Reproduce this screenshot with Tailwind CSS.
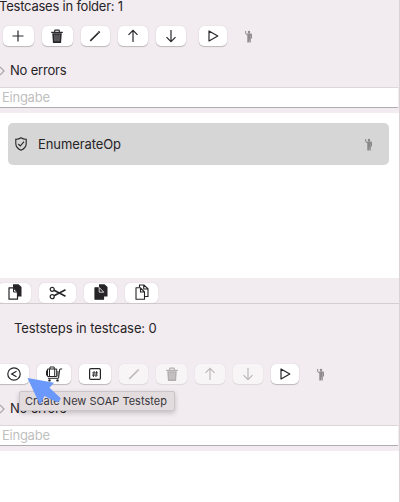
<!DOCTYPE html>
<html lang="en">
<head>
<meta charset="utf-8">
<title>Testcases</title>
<script src="https://cdn.jsdelivr.net/npm/@tailwindcss/browser@4"></script>
</head>
<body class="w-[400px] h-[502px] overflow-hidden bg-white font-['Inter',sans-serif] text-[13px] tracking-[-0.1px] text-[#262427]">
<svg class="hidden">
  <defs>
    <symbol id="plus" viewBox="0 0 16 16"><path d="M8 2.500v11M2.500 8h11" fill="none" stroke="currentColor" stroke-width="1.200"/></symbol>
    <symbol id="trash" viewBox="0 0 16 16"><path d="M5.500 3.200V2q0-.8.8-.8h3.400q.8 0 .8.8v1.200" fill="none" stroke="currentColor" stroke-width="1.200"/><path d="M1.800 3.600h12.400" stroke="currentColor" stroke-width="1.300"/><path d="M2.900 4.600h10.200L12.300 15H3.700z" fill="currentColor"/><path d="M5.700 6l.3 7M8 6v7M10.300 6L10 13" stroke="white" stroke-opacity=".65" stroke-width=".7"/></symbol>
    <symbol id="pencil" viewBox="0 0 16 16"><path d="M3.300 12.900L11.600 4.600" stroke="currentColor" stroke-width="1.500"/><path d="M11.700 4.500l1-1" stroke="currentColor" stroke-width="1.800"/></symbol>
    <symbol id="up" viewBox="0 0 16 16"><path d="M8 14V2.500M3.500 6.800L8 2.300l4.500 4.500" fill="none" stroke="currentColor" stroke-width="1.200"/></symbol>
    <symbol id="down" viewBox="0 0 16 16"><path d="M8 2v11.500M3.500 9.200L8 13.700l4.500-4.500" fill="none" stroke="currentColor" stroke-width="1.200"/></symbol>
    <symbol id="play" viewBox="0 0 16 16"><path d="M4 3v10l8.800-5z" fill="none" stroke="currentColor" stroke-width="1.200" stroke-linejoin="round"/></symbol>
    <symbol id="person" viewBox="0 0 8 13"><circle cx="4" cy="2" r="1.200" fill="currentColor"/><path d="M.7 1v2.800L2.500 5M2.300 4h4.200v4.500" fill="none" stroke="currentColor" stroke-width="1"/><path d="M2.300 3.800h3.500v8.700H4.600V8.500l-.5 4H2.300z" fill="currentColor"/></symbol>
    <symbol id="shield" viewBox="0 0 14 14"><path d="M7 .8Q9.500 2.400 12.200 2.200V6.500Q12.200 11 7 13.200Q1.800 11 1.800 6.500V2.200Q4.500 2.400 7 .8z" fill="none" stroke="currentColor" stroke-width="1.100"/><path d="M4.300 7l2 2L10 4.600" fill="none" stroke="currentColor" stroke-width="1.100"/></symbol>
    <symbol id="clip" viewBox="0 0 16 16"><path d="M6 .3h5.500L14.500 3v9.500H6z" fill="currentColor"/><path d="M2 3.800h4.500L10.500 8v7.200H2z" fill="white" stroke="currentColor" stroke-width="1.200" stroke-linejoin="round"/><path d="M6.500 4v4h4" fill="none" stroke="currentColor"/></symbol>
    <symbol id="clipdark" viewBox="0 0 16 16"><path d="M6 .3h5.500L14.500 3v9.500H6z" fill="currentColor"/><path d="M2 3.800h4.500L10.500 8v7.200H2z" fill="currentColor" stroke="currentColor" stroke-width="1.200" stroke-linejoin="round"/><path d="M6.200 3.500v4.700h4.600M6.200 3.500l4.600 4.700" fill="none" stroke="white" stroke-width=".8"/></symbol>
    <symbol id="copy" viewBox="0 0 16 16"><path d="M5.500 3.500V1h4.500L14 4.800v7.700h-3M9.700 1v4h4" fill="none" stroke="currentColor" stroke-width="1.100"/><path d="M2 3.800h4.500L10.500 8v7.200H2zM6.500 4v4h4" fill="white" stroke="currentColor" stroke-width="1.100" stroke-linejoin="round"/></symbol>
    <symbol id="scissors" viewBox="0 0 18 14"><circle cx="3.200" cy="3.300" r="2" fill="none" stroke="currentColor" stroke-width="1.200"/><circle cx="3.200" cy="10.700" r="2" fill="none" stroke="currentColor" stroke-width="1.200"/><path d="M5 4.300L16.500 10.300M5 9.700L16.500 3.700" stroke="currentColor" stroke-width="1.600"/></symbol>
    <symbol id="less" viewBox="0 0 16 16"><circle cx="8" cy="8" r="6.200" fill="none" stroke="currentColor" stroke-width="1.200"/><path d="M10.500 5.300L5.700 8l4.800 2.700" fill="none" stroke="currentColor" stroke-width="1.200"/></symbol>
    <symbol id="cart" viewBox="0 0 18 16"><path d="M2.500 3h9.200v7.500H2.500zM5 3V1h4.200v2M4.500 3v7.500M9.700 3v7.500M1.500 4.500v5M3 12.300h10.500L14.800 3h2.400M13 5v5.500" fill="none" stroke="currentColor" stroke-width="1"/><circle cx="4.500" cy="14.400" r="1.200" fill="currentColor"/><circle cx="12.500" cy="14.400" r="1.200" fill="currentColor"/></symbol>
    <symbol id="hash" viewBox="0 0 14 14"><rect x="1.600" y="1.600" width="10.800" height="10.800" rx="1.200" fill="none" stroke="currentColor" stroke-width="1.200"/><path d="M6.200 4L5.400 10M8.700 4L7.900 10M4.200 5.900h5.800M4 8.100h5.800" stroke="currentColor" stroke-width=".9"/></symbol>
  </defs>
</svg>

<main class="relative flex h-[502px] w-[400px] flex-col overflow-hidden border-r border-[#d9d3d7]">
  <section class="h-[113px] shrink-0 bg-[#f2ebef]">
    <h1 class="-ml-[1px] h-[26px] leading-[13px] tracking-[-0.22px] whitespace-nowrap">Testcases in folder: 1</h1>
    <div class="flex h-5 items-center gap-2 pl-[2.500px] text-[#29272a]">
      <button class="flex h-5 w-[31px] items-center justify-center rounded-[5px] bg-white shadow-[0_0_1px_#0003,0_1px_1px_#0003]"><svg class="size-4"><use href="#plus"/></svg></button>
      <button class="flex h-5 w-[31px] items-center justify-center rounded-[5px] bg-white shadow-[0_0_1px_#0003,0_1px_1px_#0003]"><svg class="h-[15px] w-4"><use href="#trash"/></svg></button>
      <button class="flex h-5 w-[29px] items-center justify-center rounded-[5px] bg-white shadow-[0_0_1px_#0003,0_1px_1px_#0003]"><svg class="size-4"><use href="#pencil"/></svg></button>
      <button class="flex h-5 w-[30px] items-center justify-center rounded-[5px] bg-white shadow-[0_0_1px_#0003,0_1px_1px_#0003]"><svg class="size-4"><use href="#up"/></svg></button>
      <button class="flex h-5 w-[30px] items-center justify-center rounded-[5px] bg-white shadow-[0_0_1px_#0003,0_1px_1px_#0003]"><svg class="size-4"><use href="#down"/></svg></button>
      <button class="ml-[5px] flex h-5 w-7 items-center justify-center rounded-[5px] bg-white shadow-[0_0_1px_#0003,0_1px_1px_#0003]"><svg class="size-4"><use href="#play"/></svg></button>
      <svg class="ml-[10px] h-[13px] w-2 text-[#918b8f]"><use href="#person"/></svg>
    </div>
    <div class="flex h-[41px] items-center pt-2">
      <svg class="h-3 w-[10px]" viewBox="0 0 10 12"><path d="M0 2l4 4-4 4" fill="none" stroke="#aaa5a8" stroke-width="1.200"/></svg>
      <span class="tracking-[-0.2px]">No errors</span>
    </div>
    <div class="flex h-[21px] w-[398px] items-center border-t border-b border-t-[#dcd6d9] border-b-[#b1acaf] bg-white pl-[2px] tracking-[-0.25px] text-[#bfbfbf]">Eingabe</div>
  </section>

  <section class="h-[165px] shrink-0 bg-white pt-[10px] pl-2">
    <div class="flex h-[42px] w-[381px] items-center rounded-[5px] bg-[#d6d6d6] pl-[6px]">
      <svg class="size-[14px]"><use href="#shield"/></svg>
      <span class="ml-[10px] pt-[2px]">EnumerateOp</span>
      <svg class="ml-auto mr-4 h-[13px] w-2 text-[#88888a]"><use href="#person"/></svg>
    </div>
  </section>

  <div class="flex h-[26px] shrink-0 items-start gap-2 border-b border-[#d3ccd0] bg-[#f2ebef] pt-[5px]">
    <button class="-ml-[2px] flex h-5 w-[33px] items-center justify-center rounded-[5px] bg-white pb-[2px] shadow-[0_0_1px_#0004]"><svg class="size-4"><use href="#clip"/></svg></button>
    <button class="flex h-5 w-[37px] items-center justify-center rounded-[5px] bg-white shadow-[0_0_1px_#0004]"><svg class="h-[14px] w-[18px]"><use href="#scissors"/></svg></button>
    <button class="flex h-5 w-[33px] items-center justify-center rounded-[5px] bg-white pb-[2px] shadow-[0_0_1px_#0004]"><svg class="size-4"><use href="#clipdark"/></svg></button>
    <button class="flex h-5 w-[33px] items-center justify-center rounded-[5px] bg-white pb-[2px] shadow-[0_0_1px_#0004]"><svg class="size-4"><use href="#copy"/></svg></button>
  </div>

  <section class="h-[147px] shrink-0 bg-[#f2ebef]">
    <h2 class="h-[60px] pt-[15px] pl-[14px] leading-[18px]">Teststeps in testcase: 0</h2>
    <div class="flex h-5 items-center gap-2">
      <button class="-ml-[5px] flex h-5 w-[34px] items-center justify-center rounded-[5px] bg-white pl-[3px] shadow-[0_0_1px_#0003,0_1px_1px_#0003]"><svg class="size-4"><use href="#less"/></svg></button>
      <button class="flex h-5 w-[34px] items-center justify-center rounded-[5px] bg-white shadow-[0_0_1px_#0003,0_1px_1px_#0003]"><svg class="h-4 w-[18px]"><use href="#cart"/></svg></button>
      <button class="flex h-5 w-8 items-center justify-center rounded-[5px] bg-white shadow-[0_0_1px_#0003,0_1px_1px_#0003]"><svg class="size-[14px]"><use href="#hash"/></svg></button>
      <button class="flex h-5 w-[29px] items-center justify-center rounded-[5px] bg-[#f8f5f7] text-[#bdb9bb] shadow-[0_0_1px_#0002,0_1px_1px_#0001]"><svg class="size-4"><use href="#pencil"/></svg></button>
      <button class="flex h-5 w-[31px] items-center justify-center rounded-[5px] bg-[#f8f5f7] text-[#b3afb1] shadow-[0_0_1px_#0002,0_1px_1px_#0001]"><svg class="h-[15px] w-4"><use href="#trash"/></svg></button>
      <button class="flex h-5 w-[30px] items-center justify-center rounded-[5px] bg-[#f8f5f7] text-[#bdb9bb] shadow-[0_0_1px_#0002,0_1px_1px_#0001]"><svg class="size-4"><use href="#up"/></svg></button>
      <button class="flex h-5 w-[30px] items-center justify-center rounded-[5px] bg-[#f8f5f7] text-[#bdb9bb] shadow-[0_0_1px_#0002,0_1px_1px_#0001]"><svg class="size-4"><use href="#down"/></svg></button>
      <button class="flex h-5 w-7 items-center justify-center rounded-[5px] bg-white shadow-[0_0_1px_#0003,0_1px_1px_#0003]"><svg class="size-4"><use href="#play"/></svg></button>
      <svg class="ml-[10px] h-[13px] w-2 text-[#918b8f]"><use href="#person"/></svg>
    </div>
    <div class="flex h-[41px] items-center pt-2">
      <svg class="h-3 w-[10px]" viewBox="0 0 10 12"><path d="M0 2l4 4-4 4" fill="none" stroke="#aaa5a8" stroke-width="1.200"/></svg>
      <span class="tracking-[-0.2px]">No errors</span>
    </div>
    <div class="flex h-[21px] w-[398px] items-center border-t border-b border-t-[#dcd6d9] border-b-[#b1acaf] bg-white pl-[2px] tracking-[-0.25px] text-[#bfbfbf]">Eingabe</div>
  </section>

  <div class="absolute top-[391px] left-[19px] flex h-5 w-[156px] items-center rounded-[2px] border border-[#cbc5c9] bg-[#e2dcdf] pl-[5px] text-[11px] tracking-[0.02px] whitespace-nowrap text-[#39363a] shadow-[0_2px_5px_#0003]">Create New SOAP Teststep</div>
  <svg class="absolute top-[376px] left-[26px] h-[32px] w-[38px]" viewBox="26 376 38 32"><path d="M27.500 378L54 382.700L49.500 387.700L61 398.500L57.500 402.500L44.500 396L40 405z" fill="#6b98fb"/></svg>
</main>
</body>
</html>
